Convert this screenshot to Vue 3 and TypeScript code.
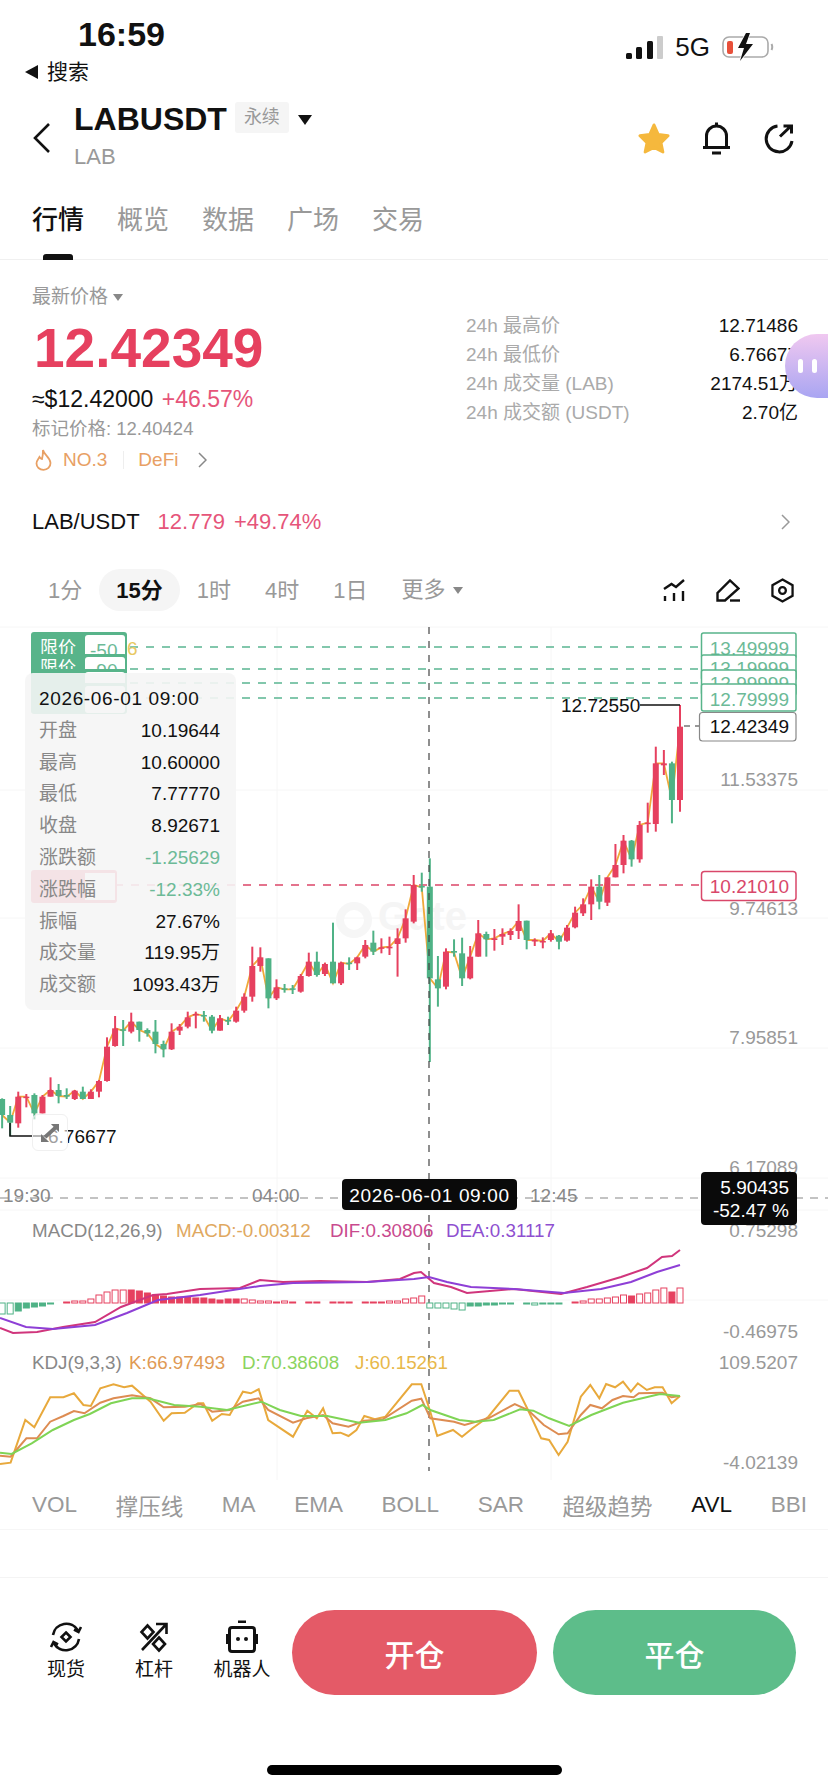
<template>
  <div class="page">
    <div class="status">
      <div class="status-left">
        <div class="clock">16:59</div>
        <div class="back-app">
          <svg width="14" height="14" viewBox="0 0 14 14"><polygon points="13,0 13,14 0,7" fill="#111" /></svg>
          <span>搜索</span>
        </div>
      </div>
      <div class="status-right">
        <svg width="37" height="23" viewBox="0 0 37 23">
          <rect x="0" y="17" width="6" height="6" rx="1.500" fill="#111" />
          <rect x="10" y="11" width="6" height="12" rx="1.500" fill="#111" />
          <rect x="21" y="5" width="6" height="18" rx="1.500" fill="#111" />
          <rect x="31" y="0" width="6" height="23" rx="1" fill="#ccc" />
        </svg>
        <span class="net">5G</span>
        <svg width="52" height="30" viewBox="0 0 52 30">
          <rect x="1" y="5" width="45" height="20" rx="6" fill="none" stroke="#aaa" stroke-width="1.600" />
          <rect x="5" y="9" width="6" height="13" rx="2" fill="#e8503a" />
          <path d="M49.500 12 q1.500 3 0 6" fill="none" stroke="#aaa" stroke-width="2" />
          <polygon points="24,1 16,16 22,16 18,29 31,12 24,12 28,1" fill="#111" stroke="#fff" stroke-width="1.500" paint-order="stroke" />
        </svg>
      </div>
    </div>

    <header class="head">
      <svg class="chev-back" width="18" height="30" viewBox="0 0 18 30"><path d="M16 1 L2 15 L16 29" fill="none" stroke="#111" stroke-width="2.600" /></svg>
      <div class="title-col">
        <div class="title-row">
          <span class="symbol">LABUSDT</span>
          <span class="tag">永续</span>
          <svg width="14" height="10" viewBox="0 0 14 10"><polygon points="0,0 14,0 7,10" fill="#111" /></svg>
        </div>
        <div class="sub">LAB</div>
      </div>
      <div class="actions">
        <svg width="32" height="31" viewBox="0 0 34 33"><polygon points="17,2 21.500,12 32,13.500 24.500,21 26.500,31 17,26 7.500,31 9.500,21 2,13.500 12.500,12" fill="#f5b83d" stroke="#f5b83d" stroke-width="3" stroke-linejoin="round" /></svg>
        <svg width="30" height="33" viewBox="0 0 30 33" fill="none" stroke="#111" stroke-width="3">
          <path d="M1 25.500 H28 M4.500 25.500 V14 a10 10 0 0 1 20 0 V25.500" />
          <path d="M14.500 0.500 V4 M10 31 H19" />
        </svg>
        <svg width="30" height="30" viewBox="0 0 30 30" fill="none" stroke="#111" stroke-width="3">
          <path d="M13.500 2 A13 13 0 1 0 28 17" />
          <path d="M16 12.500 L27 2 M19.500 2 H27.500 V9.500" />
        </svg>
      </div>
    </header>

    <nav class="tabs">
      <span v-for="(t, i) in mainTabs" :key="t" class="tab" :class="{ on: i === 0 }">{{ t }}</span>
    </nav>

    <section class="info">
      <div class="info-left">
        <div class="latest">最新价格 <i class="caret"></i></div>
        <div class="price">12.42349</div>
        <div class="fiat">≈$12.42000 <em>+46.57%</em></div>
        <div class="mark">标记价格: 12.40424</div>
        <div class="rank">
          <svg width="17" height="22" viewBox="0 0 17 22" fill="none" stroke="#e8a064" stroke-width="1.800">
            <path d="M8 1 C9 6 15 8 15.500 14 C15.500 18 12.500 20.800 8.500 20.800 C4.500 20.800 1.500 18 1.500 14.500 C1.500 11.500 3.500 10 4.500 8 C5.500 9.500 6 10 7 10 C8 7 8 4 8 1 Z" />
          </svg>
          <span class="no">NO.3</span>
          <span class="rank-sep"></span>
          <span>DeFi</span>
          <svg class="rank-go" width="9" height="16" viewBox="0 0 9 16"><path d="M1 1 L8 8 L1 15" fill="none" stroke="#888" stroke-width="1.500" /></svg>
        </div>
      </div>
      <div class="stats">
        <div v-for="s in stats" :key="s.label" class="stat">
          <span class="stat-label">{{ s.label }}</span>
          <span class="stat-value">{{ s.value }}</span>
        </div>
      </div>
      <div class="bubble"><i></i><i></i></div>
    </section>

    <div class="pair">
      <span class="pair-name">LAB/USDT</span>
      <span class="pair-price">12.779</span>
      <span class="pair-price">+49.74%</span>
      <svg class="pair-go" width="9" height="16" viewBox="0 0 9 16"><path d="M1 1 L8 8 L1 15" fill="none" stroke="#999" stroke-width="1.500" /></svg>
    </div>

    <div class="periods">
      <span v-for="p in periods" :key="p" class="period" :class="{ on: p === '15分' }">{{ p }}</span>
      <span class="period more">更多<i class="caret"></i></span>
      <div class="tools">
        <svg width="22" height="22" viewBox="0 0 22 22" fill="none" stroke="#111" stroke-width="2.400">
          <path d="M1 10 L8.500 5 L13 8 L21 1" />
          <path d="M2 17 V22 M11 14 V22 M20 12 V22" />
        </svg>
        <svg width="24" height="23" viewBox="0 0 24 23" fill="none" stroke="#111" stroke-width="2.400">
          <path d="M1.500 21.500 V14 L14 1.500 L22.500 9.500 L9 21.500 Z" />
          <path d="M14 21.500 H24" />
        </svg>
        <svg width="23" height="25" viewBox="0 0 24 26" fill="none" stroke="#111" stroke-width="2.400">
          <path d="M12 1.500 L22.500 7.500 V18.500 L12 24.500 L1.500 18.500 V7.500 Z" />
          <circle cx="12" cy="13" r="3.500" />
        </svg>
      </div>
    </div>

    <div class="chart">
      <svg class="plot" width="828" height="860" viewBox="0 0 828 860">
        <g class="grid">
          <path d="M0 7 H828 M0 170 H828 M0 298 H828 M0 428 H828 M0 558 H828 M0 590 H828 M0 680 H828" />
          <path d="M277 7 V860 M551 7 V860" />
        </g>

        <circle cx="354" cy="300" r="14" fill="none" stroke="#f6f6f6" stroke-width="8" />
        <text x="378" y="310" class="mark-text">Gate</text>

        <g class="dash-green">
          <path d="M130 27 H700 M130 49 H700 M130 63 H700 M130 78 H700" />
        </g>
        <path class="dash-red" d="M115 265 H700" />

        <polyline :points="avgLine" class="avg" />
        <g v-for="(c, i) in candles" :key="i">
          <line :x1="c.x" :x2="c.x" :y1="c.wickTop" :y2="c.wickBottom" :stroke="c.color" stroke-width="2" />
          <rect :x="c.x - 3" :y="c.top" width="6" :height="c.height" :fill="c.color" />
        </g>

        <path d="M10 503 V516 H48" class="hi-lo" />
        <text x="48" y="523" class="hi-lo-text">6.76677</text>
        <path d="M640 85 H680" class="hi-lo" />
        <text x="561" y="92" class="hi-lo-text">12.72550</text>
        <path d="M684 106 H699" class="dash-dark" />

        <g v-for="(t, i) in limitTags" :key="'l' + i">
          <rect x="31" :y="t.y - 1" width="96" :height="t.h + 4" rx="3" fill="#58b48a" />
          <rect x="85" :y="t.y + 2" width="40" :height="t.h" rx="3" fill="#fff" />
          <text v-if="i < 2" x="40" :y="t.base - 1" class="tag-white">限价</text>
          <text v-if="i < 2" x="90" :y="t.base + 2" class="tag-green">{{ t.offset }}</text>
        </g>
        <text x="127" y="35" class="tag-yellow">6</text>
        <rect x="31" y="250" width="86" height="33" rx="3" fill="#e6405f" />
        <rect x="85" y="253" width="30" height="27" fill="#fff" />

        <g v-for="(t, i) in limitTags" :key="'r' + i">
          <rect x="701.500" :y="t.y" width="94.500" :height="t.h" rx="2" fill="#fff" stroke="#58b48a" stroke-width="1.500" />
          <text x="789" :y="t.base" class="tag-price">{{ t.price }}</text>
        </g>

        <rect x="699.500" y="92.500" width="96.500" height="28.500" rx="3" fill="#fff" stroke="#888" stroke-width="1.200" />
        <text x="789" y="113" class="axis-dark">12.42349</text>
        <rect x="701.500" y="251.500" width="94.500" height="29" rx="3" fill="#fff" stroke="#d9476a" stroke-width="1.500" />
        <text x="789" y="273" class="axis-red">10.21010</text>

        <text v-for="a in axis" :key="a.label" x="798" :y="a.y" class="axis">{{ a.label }}</text>
        <text v-for="a in times" :key="a.label" :x="a.x" y="582" class="time">{{ a.label }}</text>

        <path class="cross-h" d="M0 578 H828" />
        <path class="cross-v" d="M429 7 V851" />

        <rect x="342" y="559" width="175" height="31" rx="4" fill="#0a0a0a" />
        <text x="429.500" y="582" class="cross-date">2026-06-01 09:00</text>
        <rect x="701" y="552" width="96" height="53" rx="4" fill="#0a0a0a" />
        <text x="789" y="574" class="cross-val">5.90435</text>
        <text x="789" y="597" class="cross-val">-52.47 %</text>

        <g v-for="(b, i) in macdBars" :key="'b' + i">
          <rect
            :x="b.x"
            :y="b.y"
            width="6"
            :height="b.h"
            :fill="b.filled ? b.color : '#fff'"
            :stroke="b.color"
            stroke-width="1"
          />
        </g>
        <polyline :points="difLine" class="line dif" />
        <polyline :points="deaLine" class="line dea" />

        <polyline :points="jLine" class="line kdj-j" />
        <polyline :points="kLine" class="line kdj-k" />
        <polyline :points="dLine" class="line kdj-d" />

        <g class="legend">
          <text x="32" y="617" class="l-gray">MACD(12,26,9)</text>
          <text x="176" y="617" class="l-orange">MACD:-0.00312</text>
          <text x="330" y="617" class="l-pink">DIF:0.30806</text>
          <text x="446" y="617" class="l-purple">DEA:0.31117</text>
          <text x="32" y="749" class="l-gray">KDJ(9,3,3)</text>
          <text x="129" y="749" class="l-k">K:66.97493</text>
          <text x="242" y="749" class="l-d">D:70.38608</text>
          <text x="355" y="749" class="l-j">J:60.15261</text>
        </g>
      </svg>

      <div class="tip">
        <div class="tip-date">2026-06-01 09:00</div>
        <div v-for="r in tipRows" :key="r.label" class="tip-row">
          <span class="tip-label">{{ r.label }}</span>
          <span :class="{ down: r.down }">{{ r.value }}</span>
        </div>
      </div>

      <div class="expand">
        <svg width="18" height="18" viewBox="0 0 20 20" fill="#777">
          <polygon points="11,0 20,0 20,9 17,6 6,16 3,13 14,3" />
          <polygon points="0,11 0,20 9,20" />
        </svg>
      </div>
    </div>

    <div class="indicators">
      <span v-for="n in indicators" :key="n" :class="{ on: n === 'AVL' }">{{ n }}</span>
    </div>

    <footer class="trade">
      <div class="shortcut">
        <svg width="34" height="34" viewBox="0 0 34 34" fill="none" stroke="#111" stroke-width="2.600">
          <path d="M4 15 A13.500 13.500 0 0 1 29 10.500" />
          <path d="M30 19 A13.500 13.500 0 0 1 5 23.500" />
          <path d="M25 9.500 L29.500 12 L32 7 M9 24.500 L4.500 22 L2 27" />
          <path d="M17 12.500 L21.500 17 L17 21.500 L12.500 17 Z" />
        </svg>
        <span>现货</span>
      </div>
      <div class="shortcut">
        <svg width="34" height="34" viewBox="0 0 34 34" fill="none" stroke="#111" stroke-width="2.600">
          <path d="M5 30 L29 4.500 M19 4 H29.500 V14" />
          <path d="M10.500 5.500 L16.500 12 L10.500 18.500 L4.500 12 Z" />
          <path d="M22 17.500 L28 24 L22 30.500 L16 24 Z" />
        </svg>
        <span>杠杆</span>
      </div>
      <div class="shortcut">
        <svg width="34" height="34" viewBox="0 0 34 34">
          <rect x="13" y="0.500" width="8" height="2.500" fill="#111" />
          <rect x="4.500" y="7.500" width="25" height="24" rx="2.500" fill="none" stroke="#111" stroke-width="3" />
          <rect x="1" y="14" width="3" height="10" fill="#111" />
          <rect x="30" y="14" width="3" height="10" fill="#111" />
          <circle cx="13" cy="19" r="2" fill="#111" />
          <circle cx="21" cy="19" r="2" fill="#111" />
        </svg>
        <span>机器人</span>
      </div>
      <button class="btn open">开仓</button>
      <button class="btn close">平仓</button>
    </footer>

    <div class="home"></div>
  </div>
</template>

<script setup lang="ts">
interface Candle {
  x: number
  top: number
  height: number
  wickTop: number
  wickBottom: number
  color: string
  close: number
}

const mainTabs = ['行情', '概览', '数据', '广场', '交易']
const periods = ['1分', '15分', '1时', '4时', '1日']
const indicators = ['VOL', '撑压线', 'MA', 'EMA', 'BOLL', 'SAR', '超级趋势', 'AVL', 'BBI']

const stats = [
  { label: '24h 最高价', value: '12.71486' },
  { label: '24h 最低价', value: '6.76677' },
  { label: '24h 成交量 (LAB)', value: '2174.51万' },
  { label: '24h 成交额 (USDT)', value: '2.70亿' },
]

const tipRows = [
  { label: '开盘', value: '10.19644' },
  { label: '最高', value: '10.60000' },
  { label: '最低', value: '7.77770' },
  { label: '收盘', value: '8.92671' },
  { label: '涨跌额', value: '-1.25629', down: true },
  { label: '涨跌幅', value: '-12.33%', down: true },
  { label: '振幅', value: '27.67%' },
  { label: '成交量', value: '119.95万' },
  { label: '成交额', value: '1093.43万' },
]

const limitTags = [
  { y: 13, h: 25, base: 35, offset: '-50', price: '13.49999' },
  { y: 35, h: 25, base: 55, offset: '-90', price: '13.19999' },
  { y: 50, h: 25, base: 70, offset: '-90', price: '12.99999' },
  { y: 64, h: 27, base: 86, offset: '-90', price: '12.79999' },
]

const axis = [
  { label: '11.53375', y: 166 },
  { label: '9.74613', y: 295 },
  { label: '7.95851', y: 424 },
  { label: '6.17089', y: 554 },
  { label: '0.75298', y: 617 },
  { label: '-0.46975', y: 718 },
  { label: '109.5207', y: 749 },
  { label: '-4.02139', y: 849 },
]

const times = [
  { label: '19:30', x: 3 },
  { label: '04:00', x: 252 },
  { label: '12:45', x: 530 },
]

// candles, newest first: colour, body top, body bottom, wick top, wick bottom (third-pixels from chart top)
const rawCandles: [string, number, number, number, number][] = [
  ['r', 320, 540, 255, 575], ['g', 430, 540, 425, 610], ['r', 430, 436, 390, 465], ['r', 430, 612, 380, 635],
  ['r', 608, 612, 548, 638], ['r', 615, 718, 603, 728], ['g', 662, 718, 660, 740], ['r', 662, 735, 645, 760],
  ['r', 735, 772, 672, 772], ['r', 772, 848, 772, 858], ['g', 800, 845, 765, 868], ['r', 800, 853, 778, 900],
  ['r', 853, 880, 835, 888], ['r', 878, 922, 860, 925], ['r', 923, 962, 915, 965], ['g', 947, 965, 945, 988],
  ['r', 940, 960, 930, 965], ['r', 963, 967, 952, 985], ['r', 960, 963, 955, 978], ['g', 902, 960, 902, 988],
  ['r', 903, 933, 853, 957], ['r', 933, 945, 925, 960], ['r', 942, 950, 925, 975], ['r', 955, 960, 927, 992],
  ['g', 942, 958, 935, 1010], ['r', 940, 1010, 900, 1010], ['r', 1010, 1075, 978, 1078], ['g', 1000, 1075, 953, 1098],
  ['g', 993, 998, 958, 1010], ['r', 995, 1100, 985, 1108], ['g', 1078, 1105, 1008, 1160], ['g', 800, 1075, 715, 1326],
  ['g', 798, 802, 758, 815], ['r', 795, 905, 765, 910], ['r', 895, 955, 868, 968], ['r', 955, 972, 925, 1070],
  ['r', 980, 985, 950, 1005], ['r', 982, 985, 955, 1000], ['g', 968, 995, 932, 1005], ['r', 975, 1010, 960, 1015],
  ['r', 1012, 1030, 1010, 1050], ['g', 1028, 1032, 1012, 1050], ['r', 1028, 1090, 1025, 1095], ['g', 1025, 1090, 908, 1090],
  ['r', 1032, 1062, 1028, 1068], ['g', 1025, 1065, 995, 1070], ['r', 1025, 1068, 998, 1070], ['r', 1068, 1115, 1062, 1118],
  ['g', 1105, 1108, 1095, 1122], ['g', 1105, 1108, 1092, 1118], ['r', 1102, 1135, 1078, 1140], ['g', 1015, 1135, 1015, 1165],
  ['r', 1012, 1038, 982, 1055], ['r', 1038, 1130, 980, 1145], ['r', 1130, 1172, 1120, 1178], ['r', 1172, 1205, 1160, 1208],
  ['g', 1200, 1204, 1190, 1215], ['r', 1195, 1232, 1185, 1232], ['g', 1190, 1232, 1185, 1240], ['g', 1185, 1188, 1173, 1205],
  ['r', 1182, 1186, 1175, 1225], ['r', 1192, 1220, 1175, 1225], ['r', 1220, 1232, 1212, 1245], ['r', 1235, 1288, 1210, 1290],
  ['g', 1272, 1288, 1262, 1312], ['g', 1235, 1272, 1200, 1300], ['g', 1230, 1240, 1225, 1250], ['g', 1205, 1230, 1205, 1265],
  ['r', 1205, 1235, 1178, 1240], ['g', 1228, 1232, 1200, 1278], ['r', 1225, 1278, 1188, 1280], ['r', 1280, 1383, 1252, 1385],
  ['r', 1383, 1415, 1380, 1432], ['r', 1415, 1437, 1408, 1437], ['g', 1415, 1437, 1400, 1437], ['r', 1412, 1437, 1410, 1440],
  ['g', 1425, 1430, 1405, 1437], ['g', 1410, 1428, 1392, 1450], ['r', 1410, 1430, 1372, 1430], ['r', 1430, 1480, 1425, 1480],
  ['g', 1425, 1480, 1420, 1498], ['r', 1430, 1433, 1422, 1462], ['r', 1430, 1510, 1415, 1523], ['g', 1485, 1508, 1458, 1548],
  ['g', 1437, 1485, 1435, 1525],
]

const RED = '#e6405f'
const GREEN = '#4fb286'
const STEP = 8.07
const LAST_X = 680

const candles: Candle[] = rawCandles.map(([c, top, bottom, wt, wb], i) => ({
  x: LAST_X - i * STEP,
  top: top / 3,
  height: Math.max((bottom - top) / 3, 1.5),
  wickTop: wt / 3,
  wickBottom: wb / 3,
  color: c === 'r' ? RED : GREEN,
  close: (c === 'r' ? top : bottom) / 3,
}))

const avgLine = candles.map((c) => `${c.x},${c.close}`).join(' ')

// macd histogram newest first, minus = below zero
const macdValues = [
  15, 11, 15, 13, 10, 9, 7, 8, 6, 5, 4, 4, 2, 1, 0, -1, -1, -1, -2, -1, 0, -1, -1, -2, -2, -3, -3, -7, -6, -5, -5, -5,
  7, 5, 4, 2, 2, 1, 1, 1, 0, 1, 1, 1, 0, 1, 1, 0, 1, 2, 1, 2, 2, 3, 4, 4, 4, 3, 4, 5, 5, 6, 6, 6, 7, 8, 10, 12, 13, 13,
  13, 11, 8, 4, 2, 2, 1, 0, -1, -3, -4, -5, -8, -11, -11,
]
const macdFilled = new Set([1, 6, 21, 22, 23, 24, 25, 26, 55, 56, 57, 58, 59, 60, 61, 62, 63, 64, 65, 66, 67, 68, 79, 80, 81, 82])
const MACD_ZERO = 683

const macdBars = macdValues
  .map((v, i) => ({
    x: LAST_X - i * STEP - 3,
    y: v >= 0 ? MACD_ZERO - v : MACD_ZERO,
    h: Math.abs(v),
    color: v >= 0 ? RED : GREEN,
    filled: macdFilled.has(i) || Math.abs(v) < 2,
  }))
  .filter((b) => b.h > 0)

const toPoints = (pts: number[][], top: number) => pts.map(([x, y]) => `${x},${y - top}`).join(' ')

const difLine = toPoints(
  [
    [0, 1328], [13, 1333], [37, 1332], [63, 1327], [95, 1322], [121, 1307], [153, 1295], [167, 1294], [200, 1289], [240, 1288],
    [260, 1280], [283, 1282], [320, 1281], [367, 1282], [400, 1279], [414, 1273], [421, 1272], [434, 1283], [451, 1287],
    [467, 1293], [514, 1289], [561, 1294], [587, 1287], [621, 1277], [647, 1268], [662, 1257], [672, 1256], [680, 1250],
  ],
  620,
)

const deaLine = toPoints(
  [
    [0, 1318], [26, 1327], [53, 1329], [95, 1325], [127, 1313], [158, 1300], [200, 1295], [260, 1286], [293, 1283], [367, 1282],
    [414, 1279], [429, 1277], [447, 1282], [471, 1287], [514, 1289], [564, 1293], [601, 1289], [631, 1282], [657, 1272], [680, 1265],
  ],
  620,
)

// kdj samples, x at 1.894 per pixel, y at 3 per pixel from the top of the pane
const kdj = (pts: number[][]) => pts.map(([x, y]) => `${(x / 1.894).toFixed(1)},${(670 + y / 3).toFixed(1)}`).join(' ')

const jLine = kdj([
  [0, 522], [20, 518], [48, 390], [65, 412], [95, 322], [120, 322], [140, 310], [158, 345], [172, 348], [190, 295], [215, 283],
  [235, 292], [250, 287], [285, 335], [310, 392], [325, 370], [350, 368], [375, 340], [385, 340], [402, 392], [420, 372], [435, 375],
  [460, 305], [475, 310], [490, 298], [508, 390], [555, 440], [582, 362], [600, 385], [612, 355], [630, 430], [645, 428], [660, 438],
  [675, 420], [690, 378], [710, 388], [730, 380], [780, 283], [798, 283], [815, 365], [828, 438], [858, 420], [875, 440], [895, 415],
  [925, 380], [965, 302], [982, 302], [1000, 360], [1025, 445], [1040, 450], [1058, 495], [1075, 455], [1100, 320], [1118, 285],
  [1135, 325], [1148, 282], [1165, 292], [1180, 275], [1195, 305], [1208, 280], [1225, 300], [1240, 292], [1255, 292], [1272, 340], [1288, 318],
])

const kLine = kdj([
  [0, 497], [20, 500], [50, 445], [70, 445], [95, 395], [120, 378], [140, 363], [160, 370], [190, 338], [215, 325], [250, 316],
  [285, 325], [310, 352], [350, 350], [380, 342], [402, 365], [435, 360], [460, 335], [490, 325], [508, 360], [555, 398], [580, 385],
  [612, 375], [630, 400], [660, 410], [690, 392], [725, 388], [780, 332], [798, 326], [815, 385], [860, 395], [880, 405], [925, 385],
  [975, 342], [1000, 360], [1030, 405], [1058, 433], [1075, 430], [1100, 375], [1118, 345], [1140, 355], [1160, 330], [1180, 318],
  [1200, 322], [1210, 310], [1255, 308], [1272, 322], [1288, 318],
])

const dLine = kdj([
  [0, 488], [22, 492], [60, 460], [100, 420], [140, 390], [170, 372], [210, 340], [250, 325], [280, 325], [330, 345], [380, 350],
  [430, 360], [495, 335], [530, 360], [570, 378], [620, 378], [680, 398], [730, 390], [770, 370], [800, 345], [815, 360], [870, 390],
  [900, 395], [935, 390], [985, 358], [1010, 362], [1040, 385], [1078, 408], [1120, 375], [1180, 338], [1250, 312], [1288, 318],
])
</script>

<style>
html,
body {
  margin: 0;
  background: #fff;
}
</style>

<style scoped>
.page {
  width: 828px;
  height: 1792px;
  overflow: hidden;
  display: flex;
  flex-direction: column;
  background: #fff;
  color: #111;
  font-family: "Liberation Sans", "Noto Sans CJK SC", sans-serif;
}

.status {
  height: 96px;
  display: flex;
  justify-content: space-between;
  padding: 0 54px 0 25px;
  box-sizing: border-box;
}
.clock {
  margin: 16px 0 0 53px;
  font-size: 34px;
  line-height: 36px;
  font-weight: 600;
}
.back-app {
  margin-top: 7px;
  display: flex;
  align-items: center;
  gap: 8px;
  font-size: 21px;
  line-height: 26px;
}
.status-right {
  display: flex;
  align-items: center;
  gap: 12px;
  height: 94px;
}
.net {
  font-size: 26px;
}

.head {
  height: 96px;
  display: flex;
  align-items: flex-start;
  padding: 0 34px 0 33px;
}
.chev-back {
  margin-top: 27px;
}
.title-col {
  margin-left: 23px;
  padding-top: 6px;
}
.title-row {
  display: flex;
  align-items: center;
  height: 34px;
}
.symbol {
  font-size: 32px;
  font-weight: 700;
}
.tag {
  margin-left: 8px;
  padding: 0 9px;
  height: 31px;
  line-height: 31px;
  font-size: 18px;
  color: #999;
  background: #f5f5f5;
  border-radius: 3px;
  position: relative;
  top: -2px;
}
.title-row svg {
  margin: 2px 0 0 9px;
}
.sub {
  margin-top: 8px;
  font-size: 22px;
  line-height: 26px;
  color: #999;
}
.actions {
  margin-left: auto;
  margin-top: 26px;
  display: flex;
  align-items: center;
  gap: 32px;
}

.tabs {
  height: 68px;
  display: flex;
  align-items: center;
  gap: 33px;
  padding: 0 32px 12px;
  box-sizing: border-box;
  border-bottom: 1px solid #f0f0f0;
}
.tab {
  position: relative;
  font-size: 26px;
  line-height: 32px;
  color: #999;
}
.tab.on {
  color: #111;
  font-weight: 500;
}
.tab.on::after {
  content: "";
  position: absolute;
  left: 11px;
  top: 50px;
  width: 30px;
  height: 6px;
  border-radius: 3px 3px 0 0;
  background: #111;
}

.info {
  position: relative;
  height: 242px;
  display: flex;
  justify-content: space-between;
  padding: 0 30px 0 32px;
}
.info-left {
  padding-top: 25px;
}
.latest {
  display: flex;
  align-items: center;
  gap: 5px;
  font-size: 19px;
  line-height: 24px;
  color: #999;
}
.caret {
  display: inline-block;
  width: 0;
  height: 0;
  border-style: solid;
  border-width: 7px 5px 0;
  border-color: #888 transparent transparent;
}
.price {
  margin: 7px 0 0 2px;
  font-size: 55px;
  line-height: 64px;
  font-weight: 700;
  color: #e6405f;
}
.fiat {
  margin-top: 6px;
  font-size: 23px;
  line-height: 26px;
}
.fiat em {
  font-style: normal;
  color: #e6557a;
  margin-left: 2px;
}
.mark {
  margin-top: 5px;
  font-size: 18.500px;
  line-height: 24px;
  color: #999;
}
.rank {
  margin-top: 6px;
  display: flex;
  align-items: center;
  font-size: 19px;
  line-height: 26px;
  color: #e8a064;
}
.rank svg:first-child {
  margin-left: 3px;
}
.no {
  margin-left: 11px;
}
.rank-sep {
  width: 1px;
  height: 18px;
  background: #eee;
  margin: 0 14px 0 16px;
}
.rank-go {
  margin-left: 20px;
}
.stats {
  width: 332px;
  padding-top: 52px;
}
.stat {
  display: flex;
  justify-content: space-between;
  height: 29px;
  line-height: 28px;
  font-size: 19px;
}
.stat-label {
  color: #aaa;
}
.bubble {
  position: absolute;
  right: 0;
  top: 74px;
  width: 43px;
  height: 64px;
  border-radius: 32px 0 0 32px;
  background: linear-gradient(#f0c8f0, #a9a5f2);
  display: flex;
  align-items: center;
  gap: 9px;
  padding-left: 13px;
  box-sizing: border-box;
}
.bubble i {
  width: 5px;
  height: 14px;
  border-radius: 3px;
  background: #fff;
  flex: none;
}

.pair {
  height: 40px;
  display: flex;
  align-items: center;
  gap: 9px;
  padding: 0 38px 0 32px;
  font-size: 22px;
}
.pair-name {
  margin-right: 9px;
}
.pair-price {
  color: #e6557a;
}
.pair-go {
  margin-left: auto;
}

.periods {
  margin-top: 27px;
  height: 42px;
  display: flex;
  align-items: center;
  padding: 0 34px 0 31px;
  font-size: 22px;
  color: #999;
}
.period {
  height: 42px;
  line-height: 44px;
  padding: 0 17px;
  border-radius: 21px;
}
.period.on {
  background: #f5f5f5;
  color: #111;
  font-weight: 700;
}
.more {
  display: flex;
  align-items: center;
  gap: 7px;
}
.tools {
  margin-left: auto;
  display: flex;
  align-items: center;
  gap: 31px;
}

.chart {
  position: relative;
  margin-top: 9px;
  height: 860px;
}
.plot {
  display: block;
}
.grid path {
  fill: none;
  stroke: #f6f6f6;
  stroke-width: 1;
}
.plot .mark-text {
  font-size: 40px;
  font-weight: 700;
  fill: #f5f5f5;
}
.dash-green path {
  fill: none;
  stroke: #5ab591;
  stroke-width: 1.500;
  stroke-dasharray: 8 8;
}
.dash-red {
  fill: none;
  stroke: #dc4668;
  stroke-width: 1.500;
  stroke-dasharray: 8 8;
}
.dash-dark {
  fill: none;
  stroke: #333;
  stroke-width: 1.200;
  stroke-dasharray: 6 5;
}
.avg {
  fill: none;
  stroke: #f0a93a;
  stroke-width: 1.800;
}
.hi-lo {
  fill: none;
  stroke: #111;
  stroke-width: 1.500;
}
.plot text {
  font-family: "Liberation Sans", "Noto Sans CJK SC", sans-serif;
  font-size: 19px;
}
.hi-lo-text {
  fill: #111;
}
.plot .tag-white {
  fill: #fff;
  font-size: 18px;
}
.tag-green {
  fill: #6cba97;
}
.tag-yellow {
  fill: #e8c860;
}
.tag-price {
  fill: #6cba97;
  text-anchor: end;
}
.axis {
  fill: #999;
  text-anchor: end;
}
.axis-dark {
  fill: #111;
  text-anchor: end;
}
.axis-red {
  fill: #d9476a;
  text-anchor: end;
}
.time {
  fill: #888;
}
.cross-h,
.cross-v {
  fill: none;
  stroke-width: 1.200;
}
.cross-h {
  stroke: #888;
  stroke-dasharray: 8 7;
}
.cross-v {
  stroke: #444;
  stroke-dasharray: 7 7;
}
.cross-date {
  fill: #fff;
  text-anchor: middle;
  letter-spacing: 0.650px;
}
.cross-val {
  fill: #fff;
  text-anchor: end;
}
.line {
  fill: none;
  stroke-width: 2;
}
.dif {
  stroke: #d0357c;
}
.dea {
  stroke: #8e3fd6;
}
.kdj-j {
  stroke: #e8a93c;
}
.kdj-k {
  stroke: #dd8c52;
}
.kdj-d {
  stroke: #7fd455;
}
.legend text {
  font-size: 18.800px;
}
.l-gray {
  fill: #888;
}
.l-orange {
  fill: #e0a860;
}
.l-pink {
  fill: #c94a8e;
}
.l-purple {
  fill: #8e4fd0;
}
.l-k {
  fill: #e09a55;
}
.l-d {
  fill: #8bd45e;
}
.l-j {
  fill: #e8b84a;
}

.tip {
  position: absolute;
  left: 25px;
  top: 53px;
  width: 211px;
  height: 337px;
  box-sizing: border-box;
  padding: 10px 16px 0 14px;
  border-radius: 8px;
  background: rgba(245, 245, 245, 0.9);
  font-size: 19px;
  line-height: 31.800px;
}
.tip-date {
  letter-spacing: 0.650px;
}
.tip-row {
  display: flex;
  justify-content: space-between;
}
.tip-label {
  color: #888;
}
.down {
  color: #6cba97;
}
.expand {
  position: absolute;
  left: 32px;
  top: 494px;
  width: 36px;
  height: 37px;
  box-sizing: border-box;
  border: 1px solid #f0f0f0;
  border-radius: 6px;
  background: rgba(255, 255, 255, 0.6);
  display: flex;
  align-items: center;
  justify-content: center;
}

.indicators {
  height: 50px;
  display: flex;
  align-items: center;
  justify-content: space-between;
  padding: 0 21px 0 32px;
  font-size: 22.500px;
  color: #999;
  border-bottom: 1px solid #f6f6f6;
  box-sizing: border-box;
}
.indicators .on {
  color: #111;
}

.trade {
  margin-top: 47px;
  padding: 32px 32px 0 22px;
  border-top: 1px solid #f4f4f4;
  display: flex;
  align-items: flex-start;
}
.shortcut {
  width: 88px;
  padding-top: 10px;
  display: flex;
  flex-direction: column;
  align-items: center;
  font-size: 19px;
  line-height: 24px;
}
.shortcut span {
  margin-top: 4px;
}
.btn {
  height: 85px;
  border: 0;
  border-radius: 43px;
  color: #fff;
  font-family: inherit;
  font-size: 30px;
  font-weight: 500;
}
.open {
  width: 245px;
  margin-left: 6px;
  background: #e45a67;
}
.close {
  width: 243px;
  margin-left: 16px;
  background: #5dbd8a;
}
.home {
  align-self: center;
  width: 295px;
  height: 10px;
  margin-top: 70px;
  border-radius: 5px;
  background: #000;
}
</style>
